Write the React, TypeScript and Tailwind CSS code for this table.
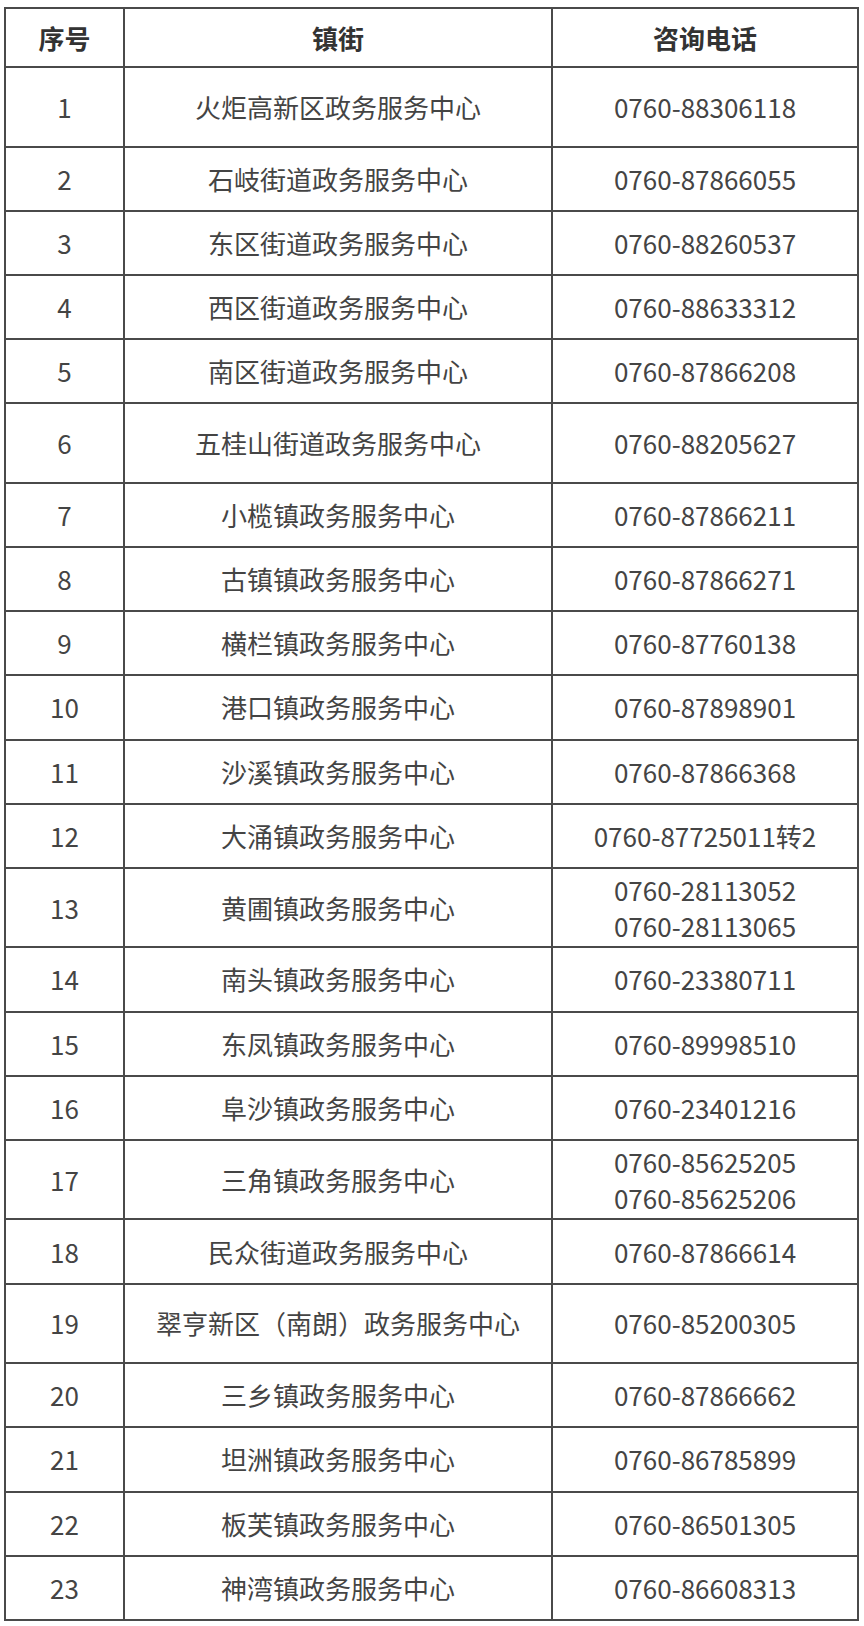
const rows: { no: number; name: string; tel: string[]; tall?: boolean }[] = [
  { no: 1, name: '火炬高新区政务服务中心', tel: ['0760-88306118'], tall: true },
  { no: 2, name: '石岐街道政务服务中心', tel: ['0760-87866055'] },
  { no: 3, name: '东区街道政务服务中心', tel: ['0760-88260537'] },
  { no: 4, name: '西区街道政务服务中心', tel: ['0760-88633312'] },
  { no: 5, name: '南区街道政务服务中心', tel: ['0760-87866208'] },
  { no: 6, name: '五桂山街道政务服务中心', tel: ['0760-88205627'], tall: true },
  { no: 7, name: '小榄镇政务服务中心', tel: ['0760-87866211'] },
  { no: 8, name: '古镇镇政务服务中心', tel: ['0760-87866271'] },
  { no: 9, name: '横栏镇政务服务中心', tel: ['0760-87760138'] },
  { no: 10, name: '港口镇政务服务中心', tel: ['0760-87898901'] },
  { no: 11, name: '沙溪镇政务服务中心', tel: ['0760-87866368'] },
  { no: 12, name: '大涌镇政务服务中心', tel: ['0760-87725011转2'] },
  { no: 13, name: '黄圃镇政务服务中心', tel: ['0760-28113052', '0760-28113065'], tall: true },
  { no: 14, name: '南头镇政务服务中心', tel: ['0760-23380711'] },
  { no: 15, name: '东凤镇政务服务中心', tel: ['0760-89998510'] },
  { no: 16, name: '阜沙镇政务服务中心', tel: ['0760-23401216'] },
  { no: 17, name: '三角镇政务服务中心', tel: ['0760-85625205', '0760-85625206'], tall: true },
  { no: 18, name: '民众街道政务服务中心', tel: ['0760-87866614'] },
  { no: 19, name: '翠亨新区（南朗）政务服务中心', tel: ['0760-85200305'], tall: true },
  { no: 20, name: '三乡镇政务服务中心', tel: ['0760-87866662'] },
  { no: 21, name: '坦洲镇政务服务中心', tel: ['0760-86785899'] },
  { no: 22, name: '板芙镇政务服务中心', tel: ['0760-86501305'] },
  { no: 23, name: '神湾镇政务服务中心', tel: ['0760-86608313'] },
];

const cell = 'border-2 border-[#4a4a4a] text-center align-middle p-0';

export default function App() {
  return (
    <div className="bg-white w-[864px] min-h-[1626px] pt-[7px] pl-[4px] font-['Noto_Sans_CJK_SC','Noto_Sans',sans-serif] text-[#444]">
      <table className="table-fixed border-collapse w-[855px] text-[26px] leading-[36px]">
        <colgroup>
          <col className="w-[119px]" />
          <col className="w-[428px]" />
          <col className="w-[306px]" />
        </colgroup>
        <thead>
          <tr className="h-[59px]">
            <th className={`${cell} font-bold text-[#333]`}>序号</th>
            <th className={`${cell} font-bold text-[#333]`}>镇街</th>
            <th className={`${cell} font-bold text-[#333]`}>咨询电话</th>
          </tr>
        </thead>
        <tbody>
          {rows.map((r) => (
            <tr key={r.no} className={r.tall ? 'h-[79.5px]' : 'h-[64.2px]'}>
              <td className={cell}>{r.no}</td>
              <td className={cell}>{r.name}</td>
              <td className={cell}>
                {r.tel.map((t) => (
                  <div key={t}>{t}</div>
                ))}
              </td>
            </tr>
          ))}
        </tbody>
      </table>
    </div>
  );
}
